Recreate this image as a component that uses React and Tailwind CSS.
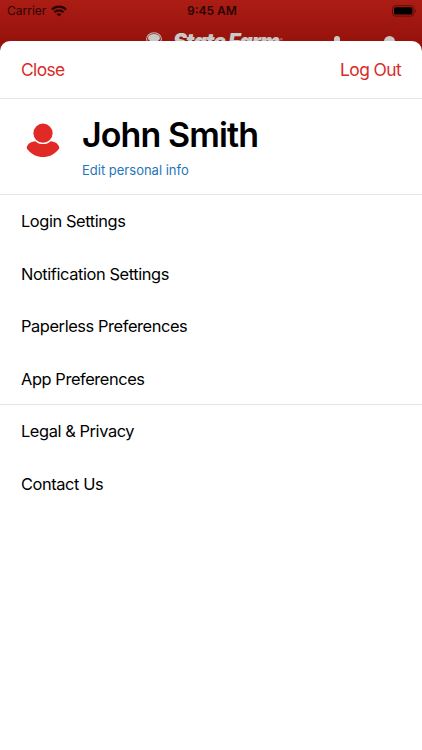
import React from 'react'

const accountLinks = [
    "Login Settings",
    "Notification Settings",
    "Paperless Preferences",
    "App Preferences",
];

const supportLinks = [
    "Legal & Privacy",
    "Contact Us",
];

const WifiIcon = () => (
    <svg width="16" height="12" viewBox="0 0 16 12" fill="none" stroke="#2b0503" strokeWidth="2.2">
        <path d="M1 4.6C4.9 .7 11.1 .7 15 4.6" />
        <path d="M3.5 7.3C6 4.8 10 4.8 12.5 7.3" />
        <path d="M8 11.6L5.5 9.1C6.9 7.8 9.1 7.8 10.5 9.1Z" fill="#2b0503" stroke="none" />
    </svg>
)

const BatteryIcon = () => (
    <svg width="25" height="12" viewBox="0 0 25 12">
        <rect x=".5" y=".7" width="21.4" height="10.4" rx="3" fill="none" stroke="#5c0d08" />
        <rect x="2" y="2.2" width="18.4" height="7.4" rx="1.6" fill="#000" />
        <path d="M23 4.2C24.2 4.6 24.2 7.2 23 7.6Z" fill="#5c0d08" />
    </svg>
)

const UserIcon = () => (
    <svg width="34" height="36" viewBox="0 0 34 36" fill="#e12a26">
        <path d="M9.5 18.3H24.5C29.8 18.6 32.6 21.4 33.2 24.3C33.4 25.2 33 25.9 32.4 26.6C24.6 36.6 9.4 36.6 1.6 26.6C1 25.9 .6 25.2 .8 24.3C1.4 21.4 4.2 18.6 9.5 18.3Z" />
        <circle cx="17" cy="10.2" r="10.9" fill="#fff" />
        <circle cx="17" cy="10.2" r="9.6" />
    </svg>
)

const LogoMark = () => (
    <svg width="16" height="14" viewBox="0 0 16 14">
        <ellipse cx="8" cy="7" rx="7.4" ry="6.2" fill="none" stroke="#c4bab8" strokeWidth="1.1" />
        <ellipse cx="8" cy="6" rx="6" ry="3.9" fill="#c9c9c7" />
        <path d="M5 8H11V14H5Z" fill="#c9c9c7" />
    </svg>
)

function MenuList({ items }) {
    return (
        <ul>
            {items.map((item, index) => (
                <li key={index}>
                    <button type="button" className="flex h-[52.6px] w-full items-center px-[21px] text-left text-[16.4px] tracking-[-0.41px] text-black">
                        {item}
                    </button>
                </li>
            ))}
        </ul>
    )
}

export default function App() {
    return (
        <div className="flex h-[750px] w-full flex-col overflow-hidden bg-linear-to-b from-[#ab1d15] to-[#97120c] to-[41px] font-['Inter',sans-serif]">
            <header className="h-[41px] shrink-0">
                <div className="grid h-[22px] grid-cols-3 items-center pl-[7px] pr-[5px] text-[12px] text-[#2b0503]">
                    <div className="flex items-center gap-[5px]">
                        <span className="text-[12px]">Carrier</span>
                        <WifiIcon />
                    </div>
                    <span className="text-center font-semibold">9:45 AM</span>
                    <div className="flex justify-end">
                        <BatteryIcon />
                    </div>
                </div>
                <div className="flex h-11 items-start pl-[146px] pr-[27px] pt-[10px]">
                    <LogoMark />
                    <span className="ml-[11px] -mt-[3px] whitespace-nowrap text-[21px] font-black italic leading-[25px] tracking-[-0.9px] text-[#c9c9c7]">State Farm</span>
                    <span className="ml-px mt-[6px] text-[4px] leading-none text-[#c4bab8]">®</span>
                    <div className="ml-auto mt-[4px] flex items-start gap-[44px]">
                        <span className="h-5 w-[6px] rounded-full bg-[#c9c9c7]"></span>
                        <span className="size-[11px] rounded-full bg-[#c9c9c7]"></span>
                    </div>
                </div>
            </header>

            {/* sheet slides over the lower half of the header */}
            <main className="relative flex-1 rounded-t-[10px] bg-white">
                <div className="flex h-[58px] items-center justify-between border-b border-[#e4e4e4] px-[21px] pt-[2px] text-[17.4px] tracking-[-0.6px] text-[#d92b28]">
                    <button type="button">Close</button>
                    <button type="button">Log Out</button>
                </div>

                <section className="flex h-24 border-b border-[#e4e4e4] pl-[26px]">
                    <div className="pt-[24px]">
                        <UserIcon />
                    </div>
                    <div className="ml-[22px] pt-[15px]">
                        <h1 className="text-[34px] font-semibold leading-[42px] tracking-[-0.9px] text-black">John Smith</h1>
                        <a href="#" className="mt-[5px] block text-[13px] leading-[18px] text-[#1f76b8]">Edit personal info</a>
                    </div>
                </section>

                <nav>
                    <MenuList items={accountLinks} />
                    <div className="-mt-px border-t border-[#e4e4e4]">
                        <MenuList items={supportLinks} />
                    </div>
                </nav>
            </main>
        </div>
    )
}
